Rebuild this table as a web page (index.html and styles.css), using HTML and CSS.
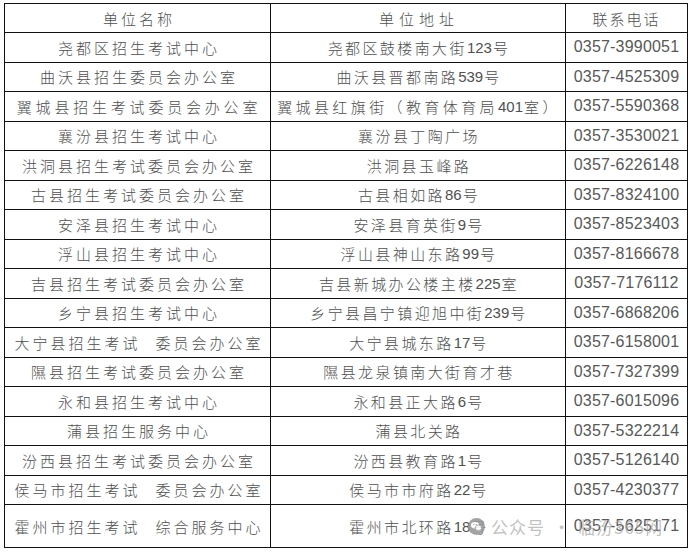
FILE: index.html
```html
<!DOCTYPE html>
<html lang="zh-CN">
<head>
<meta charset="utf-8">
<title>招生考试机构联系方式</title>
<link rel="stylesheet" href="styles.css">
</head>
<body>
<div class="page">
  <div class="table">
    <div class="cell head name">单位名称</div>
    <div class="cell head addr">单位地址</div>
    <div class="cell head tel">联系电话</div>

    <div class="cell name">尧都区招生考试中心</div>
    <div class="cell addr">尧都区鼓楼南大街<span class="n">123</span>号</div>
    <div class="cell tel">0357-3990051</div>

    <div class="cell name">曲沃县招生委员会办公室</div>
    <div class="cell addr">曲沃县晋都南路<span class="n">539</span>号</div>
    <div class="cell tel">0357-4525309</div>

    <div class="cell name wide">翼城县招生考试委员会办公室</div>
    <div class="cell addr wide">翼城县红旗街（教育体育局<span class="n">401</span>室）</div>
    <div class="cell tel">0357-5590368</div>

    <div class="cell name">襄汾县招生考试中心</div>
    <div class="cell addr">襄汾县丁陶广场</div>
    <div class="cell tel">0357-3530021</div>

    <div class="cell name">洪洞县招生考试委员会办公室</div>
    <div class="cell addr">洪洞县玉峰路</div>
    <div class="cell tel">0357-6226148</div>

    <div class="cell name">古县招生考试委员会办公室</div>
    <div class="cell addr">古县相如路<span class="n">86</span>号</div>
    <div class="cell tel">0357-8324100</div>

    <div class="cell name">安泽县招生考试中心</div>
    <div class="cell addr">安泽县育英街<span class="n">9</span>号</div>
    <div class="cell tel">0357-8523403</div>

    <div class="cell name">浮山县招生考试中心</div>
    <div class="cell addr">浮山县神山东路<span class="n">99</span>号</div>
    <div class="cell tel">0357-8166678</div>

    <div class="cell name">吉县招生考试委员会办公室</div>
    <div class="cell addr">吉县新城办公楼主楼<span class="n">225</span>室</div>
    <div class="cell tel">0357-7176112</div>

    <div class="cell name">乡宁县招生考试中心</div>
    <div class="cell addr">乡宁县昌宁镇迎旭中街<span class="n">239</span>号</div>
    <div class="cell tel">0357-6868206</div>

    <div class="cell name">大宁县招生考试<span class="gap"></span>委员会办公室</div>
    <div class="cell addr">大宁县城东路<span class="n">17</span>号</div>
    <div class="cell tel">0357-6158001</div>

    <div class="cell name">隰县招生考试委员会办公室</div>
    <div class="cell addr">隰县龙泉镇南大街育才巷</div>
    <div class="cell tel">0357-7327399</div>

    <div class="cell name">永和县招生考试中心</div>
    <div class="cell addr">永和县正大路<span class="n">6</span>号</div>
    <div class="cell tel">0357-6015096</div>

    <div class="cell name">蒲县招生服务中心</div>
    <div class="cell addr">蒲县北关路</div>
    <div class="cell tel">0357-5322214</div>

    <div class="cell name">汾西县招生考试委员会办公室</div>
    <div class="cell addr">汾西县教育路<span class="n">1</span>号</div>
    <div class="cell tel">0357-5126140</div>

    <div class="cell name">侯马市招生考试<span class="gap"></span>委员会办公室</div>
    <div class="cell addr">侯马市市府路<span class="n">22</span>号</div>
    <div class="cell tel">0357-4230377</div>

    <div class="cell name">霍州市招生考试<span class="gap"></span>综合服务中心</div>
    <div class="cell addr">霍州市北环路<span class="n">18</span>号</div>
    <div class="cell tel">0357-5625171</div>
  </div>

  <div class="watermark">
    <svg class="wm-icon" width="17" height="17" viewBox="0 0 17 17">
      <circle cx="8.5" cy="8.5" r="8.5" fill="#9a9a9a"/>
      <ellipse cx="7" cy="7.3" rx="4" ry="3.3" fill="#fff"/>
      <ellipse cx="10.4" cy="10" rx="3.3" ry="2.7" fill="#fff" stroke="#9a9a9a" stroke-width="0.8"/>
      <circle cx="5.6" cy="6.6" r="0.6" fill="#9a9a9a"/>
      <circle cx="8.3" cy="6.6" r="0.6" fill="#9a9a9a"/>
    </svg>
    <span class="wm-text">公众号</span>
    <span class="wm-dot">·</span>
    <span class="wm-text">临汾365网</span>
  </div>
</div>
</body>
</html>
```

FILE: styles.css
```css
html, body {
  margin: 0;
  padding: 0;
  background: #ffffff;
}

.page {
  position: relative;
  width: 689px;
  height: 553px;
  overflow: hidden;
  padding-top: 3px;
  box-sizing: border-box;
}

.table {
  display: grid;
  grid-template-columns: 266px 295px 122px;
  grid-template-rows: 29px repeat(16, 29.5px) 43px;
  margin-left: 4px;
  width: fit-content;
  border-top: 1px solid #111;
  border-left: 1px solid #111;
}

.cell {
  display: flex;
  align-items: center;
  justify-content: center;
  border-right: 1px solid #111;
  border-bottom: 1px solid #111;
  font-family: "Noto Sans CJK SC", "Noto Sans CJK JP", sans-serif;
  font-weight: 300;
  font-size: 15px;
  color: #505050;
  white-space: nowrap;
  box-sizing: border-box;
  line-height: 1;
}

.name {
  letter-spacing: 3px;
  padding-left: 3px;
}

.name.wide {
  letter-spacing: 3.8px;
}

.addr {
  letter-spacing: 2.4px;
  padding-left: 2px;
}

.addr.wide {
  letter-spacing: 3.4px;
}

.head.addr {
  letter-spacing: 5px;
}

.tel {
  font-family: "Liberation Sans", Arial, sans-serif;
  font-weight: 400;
  font-size: 16px;
  letter-spacing: 0.2px;
  color: #585858;
}

.head.tel {
  font-family: "Noto Sans CJK SC", "Noto Sans CJK JP", sans-serif;
  font-weight: 300;
  font-size: 15px;
  letter-spacing: 2px;
  color: #505050;
}

.n {
  font-family: "Liberation Sans", Arial, sans-serif;
  font-size: 15px;
  letter-spacing: 0;
  margin-right: 1px;
}

.gap {
  display: inline-block;
  width: 15px;
}

.watermark {
  position: absolute;
  left: 468px;
  top: 518px;
  display: flex;
  align-items: center;
  gap: 6px;
  color: rgba(165, 165, 165, 0.7);
  font-family: "Noto Sans CJK SC", sans-serif;
  font-size: 17px;
  line-height: 1;
  pointer-events: none;
}

.wm-icon {
  opacity: 0.9;
}

.wm-text {
  letter-spacing: 1px;
}

.wm-dot {
  margin: 0 2px;
}
```
